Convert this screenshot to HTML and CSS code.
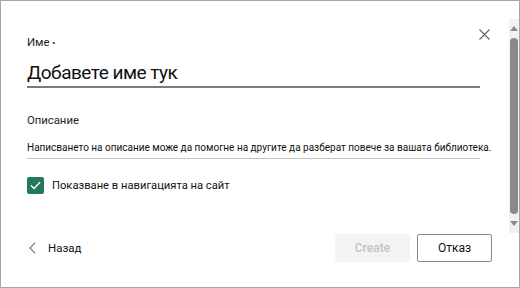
FILE: index.html
```html
<!DOCTYPE html>
<html>
<head>
    <title>Нова библиотека</title>
    <link rel="stylesheet" href="styles.css">
</head>
<body>
    <div class="panel">
        <button class="close" aria-label="Затвори">
            <svg width="11" height="11" viewBox="0 0 11 11"><path d="M0.5 0.5L10.5 10.5M10.5 0.5L0.5 10.5" stroke="#616161" stroke-width="1.1" fill="none"/></svg>
        </button>

        <div class="content">
            <div class="field field-name">
                <label class="field-label">Име <span class="req">•</span></label>
                <div class="input-big">Добавете име тук</div>
            </div>

            <div class="field field-desc">
                <label class="field-label">Описание</label>
                <div class="input-small">Написването на описание може да помогне на другите да разберат повече за вашата библиотека.</div>
            </div>

            <div class="check-row">
                <span class="checkbox">
                    <svg width="11" height="9" viewBox="0 0 11 9"><path d="M1 4.6L4 7.5L10 1.3" stroke="#fff" stroke-width="1.4" fill="none"/></svg>
                </span>
                <span>Показване в навигацията на сайт</span>
            </div>
        </div>

        <div class="footer">
            <a class="back" href="#">
                <svg width="7" height="12" viewBox="0 0 7 12"><path d="M6.2 0.6L0.9 6L6.2 11.4" stroke="#707070" stroke-width="1.1" fill="none"/></svg>
                <span>Назад</span>
            </a>
            <div class="actions">
                <button class="btn btn-primary" disabled>Create</button>
                <button class="btn btn-default">Отказ</button>
            </div>
        </div>

        <div class="scrollbar">
            <span class="arrow up"></span>
            <span class="thumb"></span>
            <span class="arrow down"></span>
        </div>
    </div>
</body>
</html>
```

FILE: styles.css
```css
* {
    box-sizing: border-box;
}
body {
    margin: 0;
    font-family: Roboto, "Noto Sans", Arial, sans-serif;
    color: #1b1b1b;
    background: #fff;
}
.panel {
    position: relative;
    width: 520px;
    height: 288px;
    border: 1px solid #a6a6a6;
    display: flex;
    flex-direction: column;
}
.close {
    position: absolute;
    top: 27px;
    left: 478px;
    border: none;
    background: none;
    padding: 0;
    width: 11px;
    height: 11px;
    cursor: pointer;
}
.content {
    padding: 34px 40px 0 26px;
    flex: 1;
}
.field-label {
    display: block;
    font-size: 11.3px;
    line-height: 16px;
    color: #222;
}
.req {
    font-size: 9px;
}
.input-big {
    margin-top: 9px;
    font-size: 19px;
    letter-spacing: -0.5px;
    line-height: 26px;
    color: #111;
    border-bottom: 2px solid #7b7b7b;
    width: 453px;
}
.field-desc {
    margin-top: 25px;
}
.input-small {
    margin-top: 11px;
    font-size: 10px;
    line-height: 16px;
    color: #111;
    white-space: nowrap;
    width: 453px;
    padding-bottom: 2px;
    border-bottom: 1px solid #c4c4c4;
}
.check-row {
    margin-top: 18px;
    display: flex;
    align-items: center;
    gap: 8px;
    font-size: 11.2px;
    color: #111;
}
.checkbox {
    width: 17px;
    height: 17px;
    border-radius: 2px;
    background: #237a5b;
    display: flex;
    align-items: center;
    justify-content: center;
}
.footer {
    display: flex;
    align-items: center;
    justify-content: space-between;
    padding: 0 27px 25px 28px;
}
.back {
    display: flex;
    align-items: center;
    gap: 12px;
    text-decoration: none;
    color: #111;
    font-size: 11.5px;
}
.actions {
    display: flex;
    gap: 7px;
}
.btn {
    width: 75px;
    height: 28px;
    border-radius: 2px;
    font-family: Roboto, "Noto Sans", Arial, sans-serif;
    font-size: 12px;
    padding: 0;
}
.btn-primary {
    background: #f3f3f3;
    border: none;
    color: #c6c6c6;
    font-weight: 600;
}
.btn-default {
    background: #fff;
    border: 1px solid #8a8a8a;
    color: #111;
}
.scrollbar {
    position: absolute;
    top: 18px;
    left: 508px;
    width: 10px;
    height: 214px;
    background: #f1f1f1;
    display: flex;
    flex-direction: column;
    align-items: center;
    padding: 7px 0;
}
.arrow {
    width: 0;
    height: 0;
    border-left: 4px solid transparent;
    border-right: 4px solid transparent;
}
.arrow.up {
    border-bottom: 5px solid #8a8a8a;
}
.arrow.down {
    border-top: 5px solid #8a8a8a;
}
.thumb {
    flex: 1;
    width: 8px;
    margin: 7px 0;
    border-radius: 4px;
    background: #8a8a8a;
}
```
